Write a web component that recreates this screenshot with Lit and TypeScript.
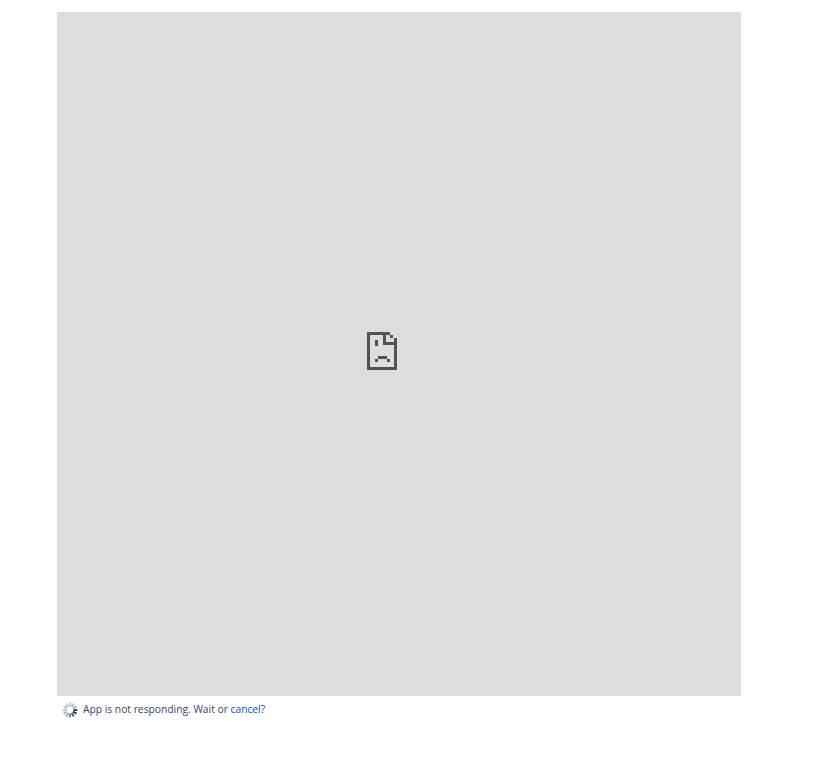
import { LitElement, html, css, svg } from "lit";
import { customElement } from "lit/decorators.js";

const spokes = [
  "#33466b", "#1f3358", "#4a5d84", "#7888a4", "#9aa7bc", "#b0bbcb",
  "#bcc5d2", "#c2cad6", "#c2cad6", "#bfc7d3", "#b6bfce", "#a8b3c5",
];

@customElement("app-root")
export class AppRoot extends LitElement {
  static styles = css`
    :host {
      display: block;
      padding: 12px 0 0 57px;
      font-family: "Open Sans", "Noto Sans", sans-serif;
    }
    .frame {
      width: 684px;
      height: 684px;
      background: #dddddd;
      display: flex;
      align-items: center;
      justify-content: center;
    }
    .sad {
      display: block;
      width: 30px;
      height: 38px;
      margin: 0 34px 7px 0;
    }
    .status {
      display: flex;
      align-items: flex-start;
      gap: 5px;
      padding: 6px 0 0 5px;
      font-size: 10.27px;
      line-height: 14px;
      color: #344563;
    }
    .spinner {
      display: block;
      width: 16px;
      height: 16px;
      flex: none;
    }
    a {
      color: #0052cc;
      text-decoration: none;
    }
  `;

  render() {
    return html`
      <div class="frame">
        <svg class="sad" viewBox="0 0 30 38" shape-rendering="crispEdges" fill="#525252" aria-hidden="true">
          <path d="M0 0H23V3H3V35H27V13H19V10H27V6H30V38H0Z" />
          <rect x="16" y="0" width="3" height="13" />
          <rect x="23" y="3" width="3" height="3" />
          <rect x="8" y="8" width="3" height="6" />
          <rect x="8" y="27" width="3" height="3" />
          <rect x="11" y="24" width="9" height="3" />
          <rect x="20" y="27" width="3" height="3" />
        </svg>
      </div>
      <div class="status">
        <svg class="spinner" viewBox="0 0 16 16" aria-hidden="true">
          ${spokes.map(
            (c, i) => svg`<line x1="8" y1="0.6" x2="8" y2="4.6" stroke=${c} stroke-width="2" transform="rotate(${90 + i * 30} 8 8)" />`
          )}
        </svg>
        <span>App is not responding. Wait or <a href="#">cancel</a>?</span>
      </div>
    `;
  }
}
